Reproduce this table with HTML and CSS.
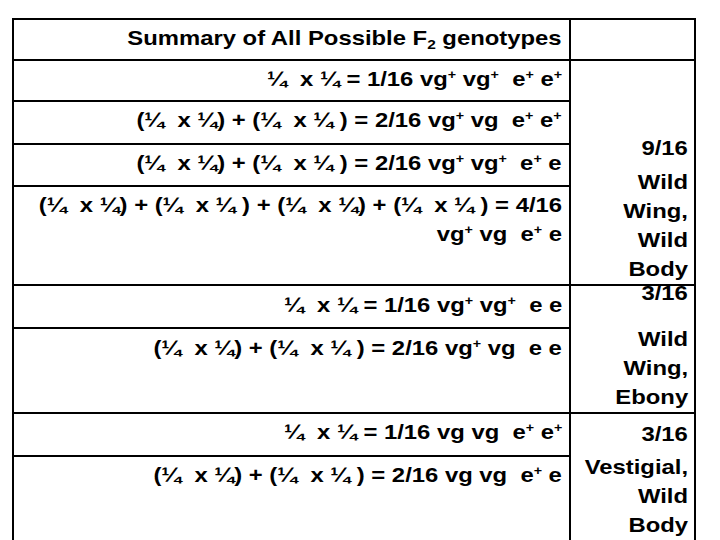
FILE: index.html
```html
<!DOCTYPE html>
<html>
<head>
<meta charset="utf-8">
<link rel="stylesheet" href="styles.css">
</head>
<body>
<div class="grid">
  <div class="cell left head"><span class="t">Summary of All Possible F<sub>2</sub> genotypes</span></div>
  <div class="cell right head"></div>

  <div class="cell left"><span class="t">¼  x ¼ = 1/16 vg<sup>+</sup> vg<sup>+</sup>  e<sup>+</sup> e<sup>+</sup></span></div>
  <div class="cell right span-a"><span class="t frac-a">9/16</span><span class="t">Wild<br>Wing,<br>Wild<br>Body</span></div>

  <div class="cell left"><span class="t">(¼  x ¼) + (¼  x ¼ ) = 2/16 vg<sup>+</sup> vg  e<sup>+</sup> e<sup>+</sup></span></div>
  <div class="cell left"><span class="t">(¼  x ¼) + (¼  x ¼ ) = 2/16 vg<sup>+</sup> vg<sup>+</sup>  e<sup>+</sup> e</span></div>
  <div class="cell left"><span class="t">(¼  x ¼) + (¼  x ¼ ) + (¼  x ¼) + (¼  x ¼ ) = 4/16<br>vg<sup>+</sup> vg  e<sup>+</sup> e</span></div>

  <div class="cell left low"><span class="t">¼  x ¼ = 1/16 vg<sup>+</sup> vg<sup>+</sup>  e e</span></div>
  <div class="cell right span-b"><span class="t frac-b">3/16</span><span class="t">Wild<br>Wing,<br>Ebony</span></div>
  <div class="cell left low"><span class="t">(¼  x ¼) + (¼  x ¼ ) = 2/16 vg<sup>+</sup> vg  e e</span></div>

  <div class="cell left"><span class="t">¼  x ¼ = 1/16 vg vg  e<sup>+</sup> e<sup>+</sup></span></div>
  <div class="cell right span-c"><span class="t frac-c">3/16</span><span class="t">Vestigial,<br>Wild<br>Body</span></div>
  <div class="cell left"><span class="t">(¼  x ¼) + (¼  x ¼ ) = 2/16 vg vg  e<sup>+</sup> e</span></div>
</div>
</body>
</html>
```
FILE: styles.css
```css
html, body {
  margin: 0;
  padding: 0;
  background: #ffffff;
}

body {
  font-family: "Liberation Sans", Arial, sans-serif;
  font-weight: bold;
  font-size: 21px;
  line-height: 29px;
  color: #000000;
}

.grid {
  display: grid;
  grid-template-columns: 557px 125px;
  grid-template-rows: 41px 41px 43px 42px 99px 43px 85px 43px 85px;
  margin: 18px 0 0 12px;
  width: max-content;
  border-top: 2px solid #000;
  border-left: 2px solid #000;
}

.cell {
  box-sizing: border-box;
  border-right: 2px solid #000;
  border-bottom: 2px solid #000;
}

/* text is drawn slightly wide, as in the original slide */
.t {
  display: inline-block;
  transform: scaleX(1.135);
  transform-origin: right center;
  text-align: right;
}

.left {
  grid-column: 1;
  text-align: right;
  white-space: pre;
  padding: 3px 7px 0 0;
}

.left.low {
  padding-top: 4px;
}

.right {
  grid-column: 2;
  padding: 0 6px 1px 0;
  display: flex;
  flex-direction: column;
  justify-content: flex-end;
  align-items: flex-end;
}

.right.head {
  grid-row: 1;
}

.span-a { grid-row: 2 / 6; }
.span-b { grid-row: 6 / 8; }
.span-c { grid-row: 8 / 10; }

.frac-a { margin-bottom: 5px; }
.frac-b { margin-bottom: 17px; }
.frac-c { margin-bottom: 4px; }

sup {
  font-size: 0.6em;
  line-height: 0;
  vertical-align: 0.55em;
}

sub {
  font-size: 0.65em;
  line-height: 0;
  vertical-align: -0.3em;
}
```
